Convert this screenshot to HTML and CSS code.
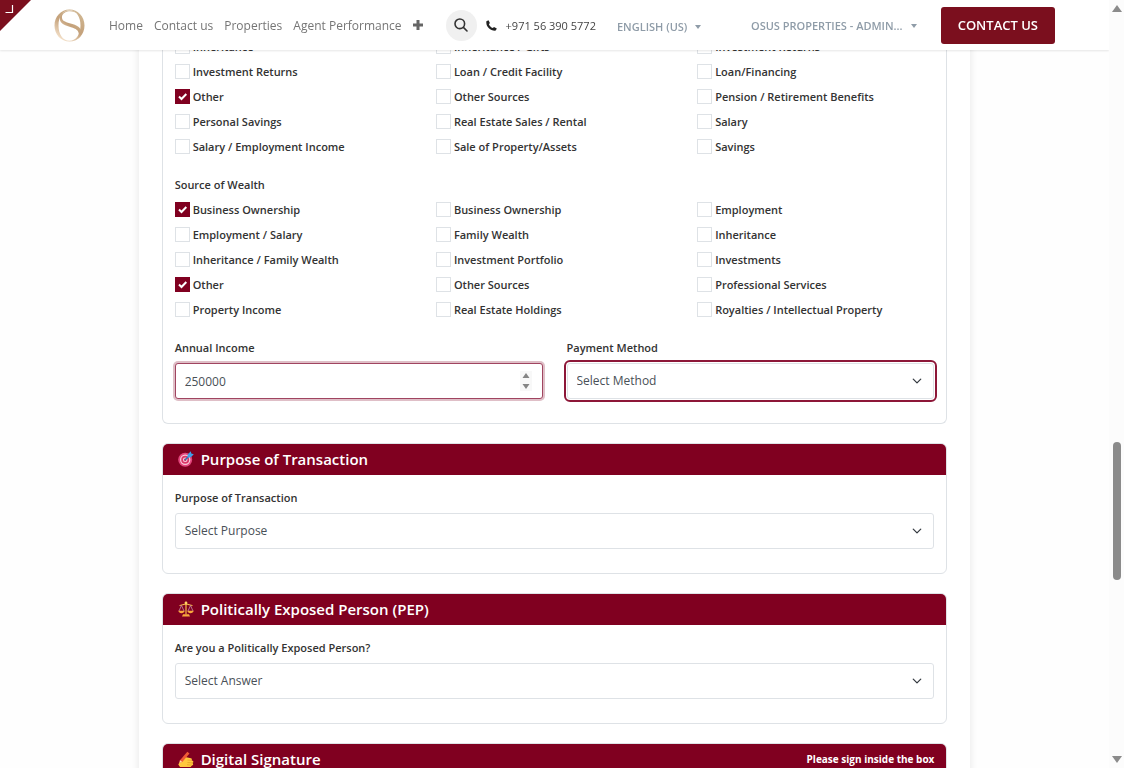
FILE: index.html
```html
<!DOCTYPE html>
<html lang="en">
<head>
    <meta charset="UTF-8">
    <meta name="viewport" content="width=device-width, initial-scale=1.0">
    <title>OSUS Properties - KYC Form</title>
    <link rel="stylesheet" href="styles.css">
</head>
<body>
    <header class="site-header">
        <a href="#" class="logo" aria-label="OSUS Properties">
            <svg width="31" height="33" viewBox="0 0 31 33">
                <defs>
                    <linearGradient id="gold" x1="0.2" y1="1" x2="0.8" y2="0">
                        <stop offset="0" stop-color="#fae9d4"/>
                        <stop offset="0.5" stop-color="#c4a17a"/>
                        <stop offset="1" stop-color="#d2ba96"/>
                    </linearGradient>
                </defs>
                <path fill="url(#gold)" fill-rule="evenodd" d="M15.500 .5C24 .5 30.500 7.500 30.500 16.500S24 32.500 15.500 32.500 .5 25.500 .5 16.500 7 .5 15.500 .5ZM15.500 1.300C8.500 1.300 4.500 8 4.500 16.500S8.500 31.700 15.500 31.700 26.500 25 26.500 16.500 22.500 1.300 15.500 1.300Z"/>
                <path fill="url(#gold)" d="M23.500 4.500C20.500 1.500 15.500.6 11 2.400 6 4.500 4.500 9.500 7 13.200 9 16 13 17 17 18.200 22 19.600 25 21.500 24.800 25.500 24.600 28.500 22.500 30.500 19.500 31.800 25 30.500 28 26.500 27 21.500 26 17.500 22 16.200 17.500 14.800 12.500 13.200 8.500 12.500 8 9 7.500 5.500 10.500 2.600 15 2.200 18.500 2 21.500 3 23.500 4.500Z"/>
            </svg>
        </a>
        <nav class="main-nav">
            <a href="#">Home</a>
            <a href="#">Contact us</a>
            <a href="#">Properties</a>
            <a href="#">Agent Performance</a>
            <a href="#" aria-label="More">
                <svg width="10" height="10" viewBox="0 0 10 10"><path fill="#666" d="M3.500 0h3v3.500H10v3H6.500V10h-3V6.500H0v-3h3.500z"/></svg>
            </a>
        </nav>
        <button class="search-btn" aria-label="Search">
            <svg width="14" height="14" viewBox="0 0 14 14" fill="none" stroke="#333" stroke-width="1.600" stroke-linecap="round"><circle cx="5.800" cy="5.800" r="4.800"/><path d="M9.400 9.400L13 13"/></svg>
        </button>
        <a href="#" class="phone">
            <svg width="11" height="11" viewBox="0 0 11 11"><path fill="#222" d="M.4 1.300L2.500.2 3.900 3 2.900 4.200C3.600 5.800 5 7.300 6.800 8.100L8 7.100 10.800 8.500 9.800 10.600C4.500 11.200-.4 6.500.4 1.300Z"/></svg>
            <span>+971 56 390 5772</span>
        </a>
        <button class="menu-btn lang">ENGLISH (US)</button>
        <button class="menu-btn user">OSUS PROPERTIES - ADMIN...</button>
        <a href="#" class="contact-btn">CONTACT US</a>
    </header>

    <a href="#" class="corner" aria-label="Open editor">
        <svg width="31" height="31" viewBox="0 0 31 31"><path fill="#7b0f1e" d="M0 0h31L0 31z"/><path fill="none" stroke="#fff" stroke-width="1.200" d="M12.500 5v7.500H5.500"/></svg>
    </a>

    <div class="scrollbar"><div class="thumb"></div></div>

    <main class="page">
        <form class="form-card">
            <section class="panel funds">
                <div class="panel-body">
                    <div class="check-grid">
                        <label><input type="checkbox">Inheritance</label>
                        <label><input type="checkbox">Inheritance / Gifts</label>
                        <label><input type="checkbox">Investment Returns</label>
                        <label><input type="checkbox">Investment Returns</label>
                        <label><input type="checkbox">Loan / Credit Facility</label>
                        <label><input type="checkbox">Loan/Financing</label>
                        <label><input type="checkbox" checked>Other</label>
                        <label><input type="checkbox">Other Sources</label>
                        <label><input type="checkbox">Pension / Retirement Benefits</label>
                        <label><input type="checkbox">Personal Savings</label>
                        <label><input type="checkbox">Real Estate Sales / Rental</label>
                        <label><input type="checkbox">Salary</label>
                        <label><input type="checkbox">Salary / Employment Income</label>
                        <label><input type="checkbox">Sale of Property/Assets</label>
                        <label><input type="checkbox">Savings</label>
                    </div>
                    <fieldset>
                        <legend class="field-label">Source of Wealth</legend>
                        <div class="check-grid">
                            <label><input type="checkbox" checked>Business Ownership</label>
                            <label><input type="checkbox">Business Ownership</label>
                            <label><input type="checkbox">Employment</label>
                            <label><input type="checkbox">Employment / Salary</label>
                            <label><input type="checkbox">Family Wealth</label>
                            <label><input type="checkbox">Inheritance</label>
                            <label><input type="checkbox">Inheritance / Family Wealth</label>
                            <label><input type="checkbox">Investment Portfolio</label>
                            <label><input type="checkbox">Investments</label>
                            <label><input type="checkbox" checked>Other</label>
                            <label><input type="checkbox">Other Sources</label>
                            <label><input type="checkbox">Professional Services</label>
                            <label><input type="checkbox">Property Income</label>
                            <label><input type="checkbox">Real Estate Holdings</label>
                            <label><input type="checkbox">Royalties / Intellectual Property</label>
                        </div>
                    </fieldset>
                    <div class="two-cols">
                        <div>
                            <label class="field-label" for="income">Annual Income</label>
                            <input class="control income" type="number" id="income" value="250000">
                        </div>
                        <div>
                            <label class="field-label" for="payment">Payment Method</label>
                            <select class="control focus-ring" id="payment"><option>Select Method</option></select>
                        </div>
                    </div>
                </div>
            </section>

            <section class="panel">
                <h2 class="panel-head">
                    <svg width="16" height="16" viewBox="0 0 16 16">
                        <circle cx="7.200" cy="8.800" r="7" fill="#e3457c"/><circle cx="7.200" cy="8.800" r="5.200" fill="#f7cdda"/><circle cx="7.200" cy="8.800" r="4" fill="#dc3568"/><circle cx="7.200" cy="8.800" r="2.300" fill="#f7cdda"/><circle cx="7.200" cy="8.800" r="1.200" fill="#c9255a"/>
                        <path d="M7 9l5-5" stroke="#2476b8" stroke-width="1.300"/><path fill="#3f9fe8" d="M9.500 6.500L9.800 3.200 12.800.2 13.300 2.500 15.800 3.200 12.800 6.200z"/>
                    </svg>
                    <span>Purpose of Transaction</span>
                </h2>
                <div class="panel-body">
                    <label class="field-label" for="purpose">Purpose of Transaction</label>
                    <select class="control" id="purpose"><option>Select Purpose</option></select>
                </div>
            </section>

            <section class="panel">
                <h2 class="panel-head">
                    <svg width="16" height="16" viewBox="0 0 16 16" fill="none">
                        <path stroke="#f5b84a" stroke-width="1.200" d="M8 1v12.500M1.500 4.500C4 4.500 5.500 3 8 3s4 1.500 6.500 1.500"/>
                        <path stroke="#c88cae" stroke-width=".8" d="M3.500 4.500L1 10M3.500 4.500L6 10M12.500 4.500L10 10M12.500 4.500L15 10"/>
                        <path fill="#f9a83c" d="M.3 9.700h6.400C6.300 13 .7 13 .3 9.700ZM9.300 9.700h6.400C15.300 13 9.700 13 9.300 9.700ZM5 13.300h6l1 2.200H4z"/><circle cx="8" cy="2" r="1.400" fill="#ffd264"/>
                    </svg>
                    <span>Politically Exposed Person (PEP)</span>
                </h2>
                <div class="panel-body">
                    <label class="field-label" for="pep">Are you a Politically Exposed Person?</label>
                    <select class="control" id="pep"><option>Select Answer</option></select>
                </div>
            </section>

            <section class="panel">
                <h2 class="panel-head">
                    <svg width="16" height="16" viewBox="0 0 16 16">
                        <path fill="#ffc83d" d="M.3 13.500L3 8.700 7 6l6 1.200c1.200.3 1.300 1.600.3 1.900l1.600.8c1 .8.400 1.900-.4 1.900l.6 1.100c.3 1-.4 1.500-1 1.500L12.500 16H2z"/>
                        <path stroke="#e19b24" stroke-width=".7" fill="none" d="M9.500 9l4 .3M9.500 11.500l4.800.4M9 13.700l5 .5"/>
                        <path fill="#f05a35" d="M1.500 11.800L2 9.200 9.300.7l2.200 1.900L4.300 11z"/><path fill="#ffdcb0" d="M1.500 11.800L2 9.200 4.300 11z"/>
                    </svg>
                    <span>Digital Signature</span>
                    <small>Please sign inside the box</small>
                </h2>
                <div class="panel-body"></div>
            </section>
        </form>
    </main>
</body>
</html>
```

FILE: styles.css
```css
:root {
    --maroon: #800020;
    --brand: #7b0f1e;
    --border: #dee2e6;
    --scroll: 15px;
}

* {
    box-sizing: border-box;
}

body {
    margin: 0;
    height: 100vh;
    overflow: hidden;
    background: #fefefe;
    color: #333;
    font-family: "Segoe UI", "Open Sans", "Noto Sans", sans-serif;
    font-size: 12px;
    line-height: 18px;
}

a {
    text-decoration: none;
    color: inherit;
}

button {
    font: inherit;
    border: none;
    background: none;
    padding: 0;
}

/* Header */
.site-header {
    position: fixed;
    top: 0;
    left: 0;
    right: var(--scroll);
    z-index: 10;
    height: 50px;
    padding: 0 54px;
    display: flex;
    align-items: center;
    background: #fff;
    box-shadow: 0 1px 2px rgba(0, 0, 0, 0.1);
    white-space: nowrap;
}
.logo {
    display: flex;
    margin-right: 24px;
}
.main-nav {
    display: flex;
    gap: 11px;
    padding-top: 1px;
    color: #757575;
}
.search-btn {
    display: flex;
    align-items: center;
    justify-content: center;
    width: 31px;
    height: 31px;
    margin-left: 23px;
    border-radius: 50%;
    background: #f0f0f0;
}
.phone {
    display: flex;
    align-items: center;
    gap: 9px;
    margin-left: 9px;
    padding-top: 1px;
    font-size: 11px;
    color: #444;
}
.menu-btn {
    display: flex;
    align-items: center;
    gap: 8px;
    font-size: 11px;
    font-weight: 600;
    color: #8f9ca8;
}
.menu-btn::after {
    content: "";
    border: 3px solid transparent;
    border-top: 4px solid #8f9ca8;
    border-bottom: 0;
}
.lang {
    margin-left: 21px;
    padding-top: 3px;
}
.user {
    margin-left: auto;
    padding-top: 1px;
}
.contact-btn {
    margin-left: 24px;
    padding: 9px 17px;
    border-radius: 3px;
    background: var(--brand);
    color: #fff;
    font-size: 13px;
    font-weight: 600;
    line-height: 19px;
}
.corner {
    position: fixed;
    top: 0;
    left: 0;
    z-index: 11;
}

/* Scrollbar */
.scrollbar {
    position: fixed;
    top: 0;
    right: 0;
    bottom: 0;
    z-index: 12;
    width: var(--scroll);
    background: #fcfcfc;
    display: flex;
    flex-direction: column;
    align-items: center;
    padding: 5px 0;
}
.scrollbar::before,
.scrollbar::after {
    content: "";
    border: 5px solid transparent;
}
.scrollbar::before {
    border-top: 0;
    border-bottom: 7px solid #8b8b8b;
}
.scrollbar::after {
    border-bottom: 0;
    border-top: 7px solid #8b8b8b;
}
.thumb {
    width: 8px;
    height: 18vh;
    margin: 56vh 0 auto;
    border-radius: 4px;
    background: #8b8b8b;
}

/* Form */
.page {
    margin-right: var(--scroll);
}
.form-card {
    width: 75%;
    margin: 0 auto;
    padding: 0 23px;
    background: #fff;
    box-shadow: 0 0 8px rgba(0, 0, 0, 0.1);
}
.panel {
    margin-bottom: 19px;
    border: 1px solid var(--border);
    border-radius: 6px;
    overflow: hidden;
}
.funds {
    border-top: 0;
    padding-top: 21px;
}
.panel-head {
    display: flex;
    align-items: center;
    gap: 7px;
    margin: -1px -1px 0;
    padding: 4px 13px 4px 16px;
    background: var(--maroon);
    color: #fff;
    font-size: 15px;
    font-weight: 600;
    line-height: 24px;
}
.panel-head small {
    margin-left: auto;
    font-size: 10px;
    font-weight: 700;
}
.panel-body {
    padding: 13px 12px 24px;
}
fieldset {
    margin: 0;
    padding: 0;
    border: 0;
}
.field-label {
    display: block;
    padding: 0;
    margin-bottom: 5px;
    font-size: 11px;
    line-height: 20px;
    font-weight: 600;
}
legend.field-label {
    margin-bottom: 2px;
}
.check-grid {
    display: grid;
    grid-template-columns: repeat(3, 1fr);
    column-gap: 24px;
    margin-bottom: 16px;
}
.check-grid label {
    display: flex;
    align-items: center;
    gap: 3px;
    height: 25px;
    font-size: 11px;
    font-weight: 600;
}
.check-grid input {
    appearance: none;
    width: 15px;
    height: 15px;
    margin: 0;
    border: 1px solid var(--border);
    background: #fff;
}
.check-grid input:checked {
    border-color: var(--maroon);
    background: var(--maroon) url("data:image/svg+xml,%3Csvg xmlns='http://www.w3.org/2000/svg' viewBox='0 0 13 13'%3E%3Cpath fill='none' stroke='%23fff' stroke-width='2' d='M3 6.500l2.500 2.500 4.800-5'/%3E%3C/svg%3E") center no-repeat;
}
.two-cols {
    display: grid;
    grid-template-columns: 1fr 1fr;
    gap: 24px;
}
.control {
    appearance: none;
    display: block;
    width: 100%;
    height: 36px;
    padding: 0 9px;
    border: 1px solid var(--border);
    border-radius: 3px;
    background: #fff;
    color: #495057;
    font: inherit;
    outline: none;
}
select.control {
    background: #fff url("data:image/svg+xml,%3Csvg xmlns='http://www.w3.org/2000/svg' viewBox='0 0 16 16'%3E%3Cpath fill='none' stroke='%23343a40' stroke-linecap='round' stroke-linejoin='round' stroke-width='2' d='m2 5 6 6 6-6'/%3E%3C/svg%3E") right 11px center / 10px no-repeat;
}
.income {
    border-color: #a04460;
    box-shadow: 0 0 0 2px rgba(128, 0, 32, 0.25);
    background: #fff url("data:image/svg+xml,%3Csvg xmlns='http://www.w3.org/2000/svg' viewBox='0 0 12 20'%3E%3Cpath fill='%23f8f8f8' d='M0 0h12v20H0z'/%3E%3Cpath fill='%23858585' d='M2.500 7 6 2l3.500 5zM2.500 13h7L6 18z'/%3E%3C/svg%3E") right 10px center / 12px 20px no-repeat;
}
.income::-webkit-inner-spin-button {
    appearance: none;
}
.focus-ring {
    outline: 2px solid #8d1738;
    outline-offset: 1px;
}
```
